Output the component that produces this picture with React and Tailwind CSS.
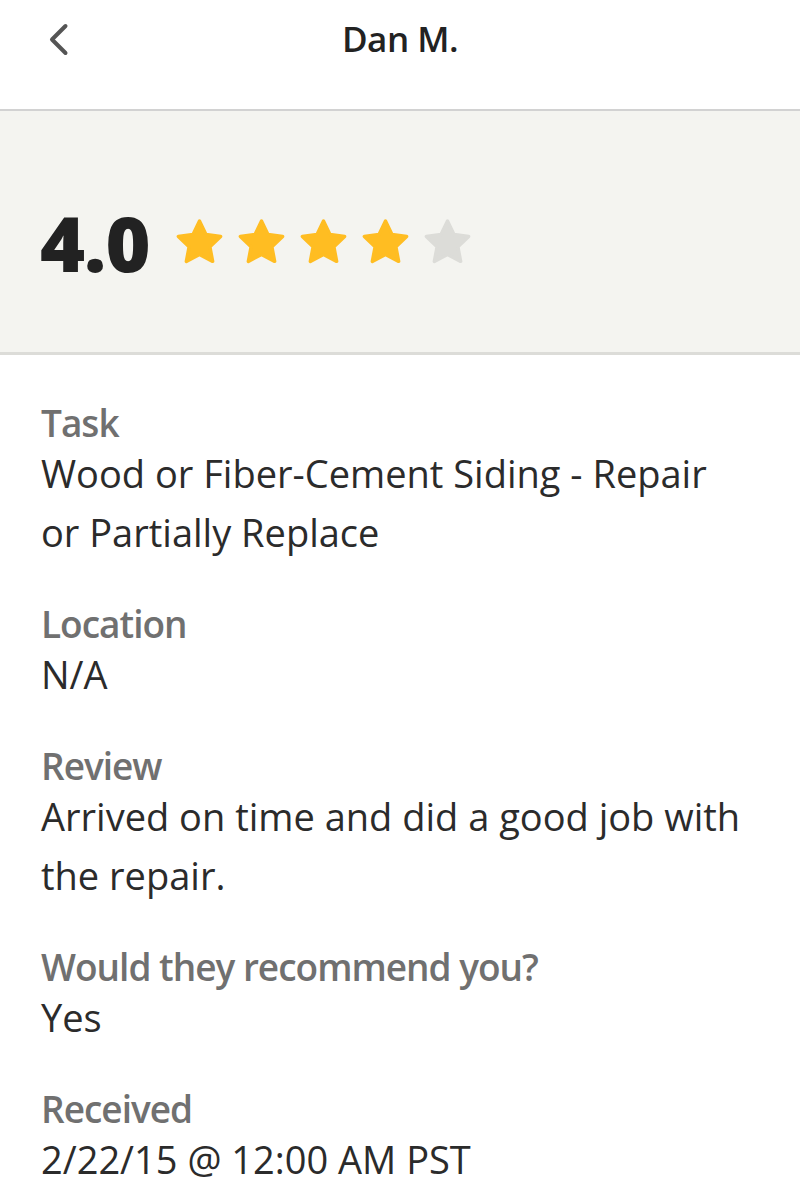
function Star({ filled }) {
  const color = filled ? '#FFBD22' : '#DCDCD8'
  return (
    <svg width="51" height="49" viewBox="0 0 24 23" aria-hidden="true">
      <path
        d="M12 1.4l3.05 6.35 6.9.9-5.05 4.85 1.3 6.9L12 17.1l-6.2 3.3 1.3-6.9-5.05-4.85 6.9-.9z"
        fill={color}
        stroke={color}
        strokeWidth="1.6"
        strokeLinejoin="round"
      />
    </svg>
  )
}

function Field({ label, children }) {
  return (
    <div className="flex flex-col">
      <div className="text-[37px] leading-[42px] font-semibold tracking-[-1px] text-[#707070]">{label}</div>
      <div className="text-[38px] leading-[59px] text-[#2b2b2b]">{children}</div>
    </div>
  )
}

export default function App() {
  const rating = 4

  return (
    <div className="w-[800px] h-[1202px] bg-white overflow-hidden font-['Open_Sans',sans-serif]">
      <header className="h-[109px] border-b-2 border-[#d2d2d2] box-content">
        <div className="h-[77px] grid grid-cols-[1fr_auto_1fr] items-center">
          <div className="pl-[48px] flex items-center">
            <svg width="24" height="36" viewBox="0 0 24 36" aria-hidden="true">
              <polyline
                points="17.5,5 4,18.5 17.5,32"
                fill="none"
                stroke="#555555"
                strokeWidth="4"
                strokeLinecap="round"
                strokeLinejoin="round"
              />
            </svg>
          </div>
          <h1 className="text-[35px] leading-none font-semibold tracking-[-0.5px] text-[#222222]">Dan M.</h1>
          <div />
        </div>
      </header>

      <section className="h-[241px] bg-[#f4f4f0] border-b-[3px] border-[#dcdcd8] box-content">
        <div className="pl-[40px] pt-[93px] flex items-center gap-[24px]">
          <span className="text-[77px] leading-none font-extrabold tracking-[-1px] text-[#222222]">4.0</span>
          <div className="flex items-center gap-[11px]">
            {[1, 2, 3, 4, 5].map((i) => (
              <Star key={i} filled={i <= rating} />
            ))}
          </div>
        </div>
      </section>

      <main className="pl-[41px] pr-[40px] pt-[47px] flex flex-col gap-[41px]">
        <Field label="Task">
          Wood or Fiber-Cement Siding - Repair
          <br />
          or Partially Replace
        </Field>
        <Field label="Location">N/A</Field>
        <Field label="Review">
          Arrived on time and did a good job with
          <br />
          the repair.
        </Field>
        <Field label="Would they recommend you?">Yes</Field>
        <Field label="Received">2/22/15 @ 12:00 AM PST</Field>
      </main>
    </div>
  )
}
